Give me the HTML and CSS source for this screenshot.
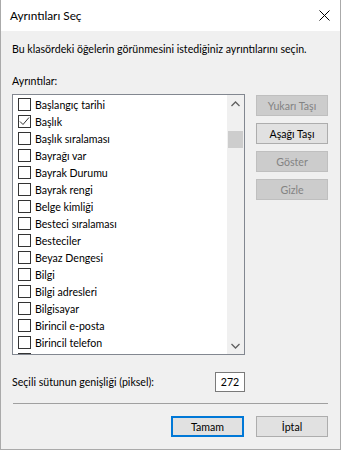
FILE: index.html
```html
<!DOCTYPE html>
<html lang="tr">
<head>
    <meta charset="utf-8">
    <title>Ayrıntıları Seç</title>
    <link rel="stylesheet" href="styles.css">
</head>
<body>
<div class="dialog">
    <div class="title_bar">
        <span class="title">Ayrıntıları Seç</span>
        <span class="close">
            <svg width="11" height="11" viewBox="0 0 11 11"><path d="M0.5 0.5 L10.5 10.5 M10.5 0.5 L0.5 10.5" stroke="#000" stroke-width="1" fill="none"/></svg>
        </span>
    </div>
    <div class="content">
        <p class="desc">Bu klasördeki öğelerin görünmesini istediğiniz ayrıntılarını seçin.</p>
        <p class="label">Ayrıntılar:</p>
        <div class="main_row">
            <div class="list_box">
                <div class="items">
                    <div class="item"><span class="check"></span>Başlangıç tarihi</div>
                    <div class="item"><span class="check">
                        <svg width="11" height="11" viewBox="0 0 11 11"><path d="M1 5.5 L4 8.5 L10 1.5" stroke="#333" stroke-width="1" fill="none"/></svg>
                    </span>Başlık</div>
                    <div class="item"><span class="check"></span>Başlık sıralaması</div>
                    <div class="item"><span class="check"></span>Bayrağı var</div>
                    <div class="item"><span class="check"></span>Bayrak Durumu</div>
                    <div class="item"><span class="check"></span>Bayrak rengi</div>
                    <div class="item"><span class="check"></span>Belge kimliği</div>
                    <div class="item"><span class="check"></span>Besteci sıralaması</div>
                    <div class="item"><span class="check"></span>Besteciler</div>
                    <div class="item"><span class="check"></span>Beyaz Dengesi</div>
                    <div class="item"><span class="check"></span>Bilgi</div>
                    <div class="item"><span class="check"></span>Bilgi adresleri</div>
                    <div class="item"><span class="check"></span>Bilgisayar</div>
                    <div class="item"><span class="check"></span>Birincil e-posta</div>
                    <div class="item"><span class="check"></span>Birincil telefon</div>
                    <div class="item"><span class="check"></span></div>
                </div>
                <div class="scrollbar">
                    <span class="arrow">
                        <svg width="9" height="6" viewBox="0 0 9 6"><path d="M0.5 5 L4.5 1 L8.5 5" stroke="#606060" stroke-width="1.3" fill="none"/></svg>
                    </span>
                    <span class="track"><span class="thumb"></span></span>
                    <span class="arrow">
                        <svg width="9" height="6" viewBox="0 0 9 6"><path d="M0.5 1 L4.5 5 L8.5 1" stroke="#606060" stroke-width="1.3" fill="none"/></svg>
                    </span>
                </div>
            </div>
            <div class="side_buttons">
                <span class="button disabled">Yukarı Taşı</span>
                <span class="button">Aşağı Taşı</span>
                <span class="button disabled">Göster</span>
                <span class="button disabled">Gizle</span>
            </div>
        </div>
        <div class="width_row">
            <span>Seçili sütunun genişliği (piksel):</span>
            <span class="width_input">272</span>
        </div>
        <hr class="separator">
        <div class="footer_buttons">
            <span class="button default">Tamam</span>
            <span class="button">İptal</span>
        </div>
    </div>
</div>
</body>
</html>
```

FILE: styles.css
```css
    body {
        margin: 0;
        font-family: Lato, "Liberation Sans", sans-serif;
        font-size: 10.6px;
        color: #000000;
    }
    .dialog {
        width: 341px;
        height: 450px;
        box-sizing: border-box;
        border: 1px solid #aaaaaa;
        border-top: none;
        background: #f0f0f0;
        display: flex;
        flex-direction: column;
    }
    .title_bar {
        height: 31px;
        background: #ffffff;
        display: flex;
        align-items: center;
        justify-content: space-between;
        padding: 0 10px 0 9px;
    }
    .title {
        font-size: 11.8px;
    }
    .close {
        display: flex;
    }
    .content {
        padding: 0 12px 0 11px;
    }
    .desc {
        margin: 10px 0 0 0;
        line-height: 16px;
        white-space: nowrap;
    }
    .label {
        margin: 16px 0 0 0;
        line-height: 16px;
    }
    .main_row {
        display: flex;
        gap: 11px;
        margin-top: 5px;
    }
    .list_box {
        width: 233px;
        height: 261px;
        box-sizing: border-box;
        border: 1px solid #828790;
        background: #ffffff;
        display: flex;
        overflow: hidden;
    }
    .items {
        flex: 1;
        padding-top: 1px;
        overflow: hidden;
    }
    .item {
        height: 17px;
        display: flex;
        align-items: center;
        white-space: nowrap;
    }
    .check {
        width: 13px;
        height: 13px;
        box-sizing: border-box;
        border: 1px solid #333333;
        background: #ffffff;
        margin: 0 4px 0 5px;
        display: flex;
        align-items: center;
        justify-content: center;
        flex: none;
    }
    .scrollbar {
        width: 17px;
        background: #f0f0f0;
        display: flex;
        flex-direction: column;
    }
    .arrow {
        height: 17px;
        display: flex;
        align-items: center;
        justify-content: center;
    }
    .track {
        flex: 1;
        padding: 19px 1px 0 1px;
    }
    .thumb {
        display: block;
        height: 17px;
        background: #cdcdcd;
    }
    .side_buttons {
        display: flex;
        flex-direction: column;
        gap: 7px;
        padding-top: 1px;
    }
    .button {
        width: 72px;
        height: 21px;
        box-sizing: border-box;
        border: 1px solid #adadad;
        background: #e1e1e1;
        display: flex;
        align-items: center;
        justify-content: center;
    }
    .button.disabled {
        background: #cccccc;
        border-color: #bfbfbf;
        color: #838383;
    }
    .width_row {
        display: flex;
        align-items: center;
        justify-content: space-between;
        width: 233px;
        margin-top: 17px;
        white-space: nowrap;
    }
    .width_input {
        width: 30px;
        height: 20px;
        box-sizing: border-box;
        border: 1px solid #7a7a7a;
        background: #ffffff;
        display: flex;
        align-items: center;
        justify-content: center;
        flex: none;
    }
    .separator {
        margin: 11px 0 0 1px;
        border: none;
        border-top: 1px solid #a0a0a0;
        height: 0;
        width: 315px;
    }
    .footer_buttons {
        display: flex;
        justify-content: flex-end;
        gap: 12px;
        margin-top: 12px;
    }
    .button.default {
        width: 73px;
        border: 2px solid #0078d7;
    }
```
